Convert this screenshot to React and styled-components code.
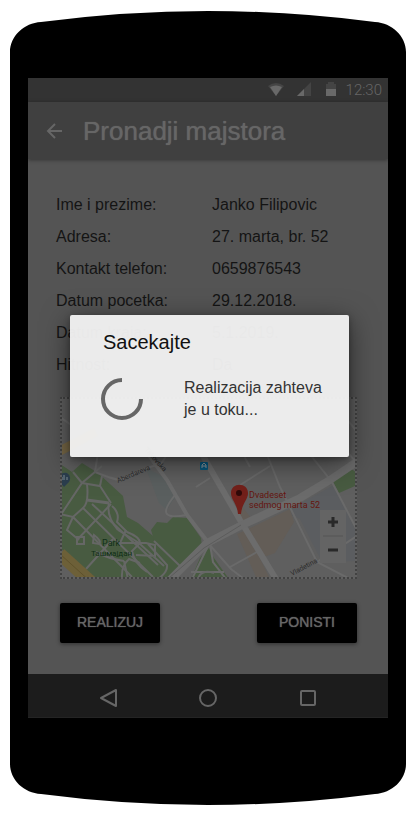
import React from "react";
import styled, { createGlobalStyle } from "styled-components";

const GlobalStyle = createGlobalStyle`
  *, *::before, *::after { box-sizing: border-box; }
  body { margin: 0; background: #fff; font-family: "Liberation Sans", Arial, sans-serif; }
`;

const Phone = styled.div`
  display: flex;
  flex-direction: column;
  padding: 10px;
`;

const Cap = styled.svg`
  display: block;
  width: 100%;
  height: 42px;
`;

const Body = styled.div`
  padding: 26px 18px 46px;
  background: #000;
`;

const Screen = styled.main`
  position: relative;
  display: flex;
  flex-direction: column;
  background: #545454;
`;

const StatusBar = styled.div`
  display: flex;
  align-items: center;
  justify-content: flex-end;
  height: 24px;
  padding: 0 6px;
  background: #333;
  color: #666;
  font: 300 15px/24px Roboto, sans-serif;
`;

const StatusIcons = styled.svg`
  width: 72px;
  height: 16px;
  margin-right: 6px;
`;

const AppBar = styled.header`
  display: flex;
  align-items: center;
  gap: 17px;
  height: 57px;
  padding: 0 16px;
  background: #404040;
  box-shadow: 0 1px 4px rgba(0, 0, 0, 0.4);
`;

const IconButton = styled.button`
  display: flex;
  padding: 0;
  border: 0;
  background: none;
  color: #666;
`;

const Title = styled.h1`
  margin: 0;
  padding-left: 2px;
  color: #666;
  font-size: 26px;
  font-weight: 400;
  line-height: 30px;
  text-shadow: 0 0 1px #666;
`;

const Content = styled.div`
  padding: 30px 31px 31px 28px;
`;

const Details = styled.dl`
  display: grid;
  grid-template-columns: 156px 1fr;
  grid-auto-rows: 32px;
  align-items: center;
  margin: 0 0 16px;
  color: #141414;
  font-size: 16px;
  dd { margin: 0; }
`;

const MapFrame = styled.div`
  margin-left: 4px;
  border: 2px dotted #424242;
  background: #606060;
`;

const MapDrawing = styled.svg`
  display: block;
  width: 100%;
  height: auto;
  font-family: Roboto, sans-serif;
`;

const Actions = styled.div`
  display: flex;
  justify-content: space-between;
  margin: 24px 0 0 4px;
`;

const ActionButton = styled.button`
  width: 100px;
  height: 40px;
  padding: 0 0 2px;
  border: 0;
  border-radius: 2px;
  background: #000;
  color: #666;
  box-shadow: 0 1px 4px rgba(0, 0, 0, 0.45);
  font: 400 14px "Liberation Sans", Arial, sans-serif;
  text-shadow: 0 0 1px #666;
`;

const NavBar = styled.nav`
  display: flex;
  align-items: center;
  justify-content: space-around;
  height: 44px;
  padding: 4px 30px 0;
  background: #1c1c1c;
  border-bottom: 1px solid #242424;
`;

const Dialog = styled.section`
  position: absolute;
  top: 237px;
  left: 42px;
  right: 39px;
  min-height: 142px;
  padding: 14px 24px 20px 33px;
  border-radius: 2px;
  background: rgba(241, 241, 241, 0.96);
  box-shadow: 0 6px 28px rgba(0, 0, 0, 0.5), 0 2px 6px rgba(0, 0, 0, 0.3);
`;

const DialogTitle = styled.h2`
  margin: 0 0 22px;
  color: #111;
  font-size: 20px;
  font-weight: 400;
  line-height: 26px;
`;

const DialogBody = styled.div`
  display: flex;
  align-items: flex-start;
  gap: 40px;
`;

const Spinner = styled.svg`
  flex: none;
  width: 44px;
  height: 44px;
  margin-left: -3px;
`;

const Message = styled.p`
  margin: 0;
  color: #333;
  font-size: 16px;
  line-height: 22px;
`;

const rows = [
  ["Ime i prezime:", "Janko Filipovic"],
  ["Adresa:", "27. marta, br. 52"],
  ["Kontakt telefon:", "0659876543"],
  ["Datum pocetka:", "29.12.2018."],
  ["Datum kraja:", "5.1.2019."],
  ["Hitnost:", "Da"],
];

const CityMap = () => (
  <MapFrame>
    <MapDrawing viewBox="2 1 293 178" role="img" aria-label="Dvadeset sedmog marta 52">
      <rect width="300" height="182" fill="#5f5f5f" />
      <path d="M86 70L108 81 119 99 113 102 107 112 99 105Z" fill="#5a5f5f" />
      <path d="M225 114L274 87 295 131V163L262 164 240 121Z" fill="#5b5d60" />
      <path d="M177 136L186 132 209 179 196 179ZM188 131L230 111 234 124 215 155 204 159ZM181 107L191 120 183 125 177 115Z" fill="#635d57" />
      <g fill="#485b41">
        <path d="M0 66L12 74 22 65 38 75 63 98 67 119 78 125 100 144 123 167 112 181H37L0 150Z" />
        <path d="M91 132L97 124 107 125 113 119 127 120 141 140 142 149 120 168 94 142Z" />
        <path d="M131 181L140 160 149 150 154 160 169 181ZM140 145L143 150 140 153Z" />
        <path d="M273 84L290 70 297 75V87L279 95Z" />
      </g>
      <g fill="none" stroke="#6a6a6a" strokeWidth="2">
        <path d="M0 19L24 36 38 55 35 74 M35 74Q52 81 60 82L83 71 101 66 108 55 M61 25L90 59" />
        <path d="M115 97Q103 112 107 116T126 117 M136 89L150 80 M177 89L210 68 M188 52L185 60 190 69" />
        <path d="M208 0V59L220 89 257 164 290 181 M220 30L252 59 272 84 297 132 M257 164L297 138 M238 0L297 65 M270 0L297 34" />
        <path d="M140 135L148 145 171 171 184 181 M170 169L197 154 M150 146L153 164 166 181 M149 146L132 181 M131 174H164" />
      </g>
      <g fill="none" stroke="#666766" strokeWidth="2">
        <path d="M0 118L22 85 42 68 M13 74L22 85 40 88 42 78 M22 85L36 73 M40 88L51 105" />
        <path d="M27 86Q29 105 23 110L93 179 M23 110L13 119 0 116 M13 119L72 179 M32 106L98 167 M13 119L7 132 19 142" />
        <path d="M51 106L17 142 M34 137Q42 143 39 146L33 145Z M17 139H24V146H17Z M53 141L26 171" />
        <path d="M27 102L49 105" strokeWidth="3" />
        <path d="M49 105Q46 118 58 132 M52 108Q60 115 57 124L67 134Q80 139 80 145" />
        <path d="M58 132L79 145 104 168 M88 146L107 167 Q108 174 98 181 M80 145L72 153Q74 165 87 174 M66 132L60 145 86 145 95 147V158L76 157 M94 143L120 168" />
        <path d="M36 154Q49 161 64 163 M62 180Q61 168 69 161L80 165 M64 163L68 181 M138 181Q141 171 154 175" />
      </g>
      <g fill="none">
        <path d="M0 53L36 34" stroke="#756645" strokeWidth="9" />
        <path d="M0 156L32 185" stroke="#6d6038" strokeWidth="13" />
        <path d="M0 156L32 185" stroke="#5f522c" strokeWidth="1" />
        <path d="M61 10L90 59 107 82 127 117 150 147" stroke="#6b6b6b" strokeWidth="4" />
        <path d="M112 0L147 65 180 122 216 181" stroke="#6c6c6c" strokeWidth="6" />
        <path d="M109 183L147 145 180 128 240 100 270 82 298 63" stroke="#6b6b6b" strokeWidth="8" />
        <path d="M109 180L144 150 181 127" stroke="#5c5c5c" strokeWidth="1" />
      </g>
      <g fill="#2b2b2b" fontSize="7">
        <text transform="translate(58 85) rotate(-23)">Aberdareva</text>
        <text transform="translate(84 52) rotate(48)">Takovska</text>
        <text transform="translate(232 178) rotate(-28)">Vladetina</text>
      </g>
      <g fill="#102f17" fontSize="9">
        <text x="42" y="148">Park</text>
        <text x="31" y="158" fontSize="8">Ташмајдан</text>
      </g>
      <rect x="140" y="64" width="8" height="8" rx="1" fill="#07577d" />
      <path d="M142 70V67L144 65 146 67V70M142 68H146" fill="none" stroke="#8b969b" />
      <path d="M0 77Q3 74 7 75Q12 78 9 84L4 89 0 84Z" fill="#2b3e4e" />
      <path d="M2 79V82M4 77V82M7 79V82" stroke="#808b91" />
      <path d="M171 95C171 84 188 84 188 95C188 102 182 105 181 116H178C177 105 171 102 171 95Z" fill="#72201a" />
      <circle cx="179" cy="95" r="3" fill="#300a09" />
      <g fill="#651610" fontSize="9">
        <text x="189" y="100">Dvadeset</text>
        <text x="189" y="110">sedmog marta 52</text>
      </g>
      <rect x="260" y="112" width="26" height="53" fill="#646464" />
      <path d="M263 138H283" stroke="#555" />
      <path d="M268 124H278M273 119V129M268 152H278" stroke="#292929" strokeWidth="3" />
    </MapDrawing>
  </MapFrame>
);

export default function App() {
  return (
    <>
      <GlobalStyle />
      <Phone>
        <Cap viewBox="0 0 396 42" preserveAspectRatio="none" aria-hidden="true">
          <path d="M0 42C0 26 14 13 31 12Q115 1 198 1T365 12C382 13 396 26 396 42Z" />
        </Cap>
        <Body>
          <Screen>
            <StatusBar>
              <StatusIcons viewBox="0 0 72 16" aria-hidden="true">
                <path d="M0 4Q8-2 16 4L8 14Z" fill="#454545" />
                <path d="M2 5Q8 2 14 5L8 14Z" fill="#696969" />
                <path d="M29 14L43 0V14Z" fill="#444" />
                <path d="M29 14L36 7V14Z" fill="#696969" />
                <path d="M58 2H60V0H66V2H68V14H58Z" fill="#444" />
                <path d="M58 7H68V14H58Z" fill="#696969" />
              </StatusIcons>
              <span>12:30</span>
            </StatusBar>
            <AppBar>
              <IconButton aria-label="Nazad">
                <svg width="20" height="20" fill="none" stroke="currentColor" strokeWidth="2">
                  <path d="M18 10H4M11 3L4 10L11 17" />
                </svg>
              </IconButton>
              <Title>Pronadji majstora</Title>
            </AppBar>
            <Content>
              <Details>
                {rows.map(([label, value]) => (
                  <React.Fragment key={label}>
                    <dt>{label}</dt>
                    <dd>{value}</dd>
                  </React.Fragment>
                ))}
              </Details>
              <CityMap />
              <Actions>
                <ActionButton>REALIZUJ</ActionButton>
                <ActionButton>PONISTI</ActionButton>
              </Actions>
            </Content>
            <NavBar>
              <IconButton aria-label="Back">
                <svg width="20" height="20" fill="none" stroke="currentColor" strokeWidth="2" strokeLinejoin="round">
                  <path d="M18 2V18L3 10Z" />
                </svg>
              </IconButton>
              <IconButton aria-label="Home">
                <svg width="20" height="20" fill="none" stroke="currentColor" strokeWidth="2">
                  <circle cx="10" cy="10" r="8" />
                </svg>
              </IconButton>
              <IconButton aria-label="Recent apps">
                <svg width="20" height="20" fill="none" stroke="currentColor" strokeWidth="2">
                  <rect x="3" y="3" width="14" height="14" rx="1" />
                </svg>
              </IconButton>
            </NavBar>
            <Dialog role="dialog" aria-labelledby="wait-title">
              <DialogTitle id="wait-title">Sacekajte</DialogTitle>
              <DialogBody>
                <Spinner viewBox="0 0 44 44" aria-hidden="true">
                  <path d="M22 3A19 19 0 1 0 41 22" fill="none" stroke="#666" strokeWidth="4" />
                </Spinner>
                <Message>Realizacija zahteva je u toku...</Message>
              </DialogBody>
            </Dialog>
          </Screen>
        </Body>
        <Cap viewBox="0 0 396 42" preserveAspectRatio="none" aria-hidden="true">
          <path d="M0 0C0 16 14 29 31 30Q115 41 198 41T365 30C382 29 396 16 396 0Z" />
        </Cap>
      </Phone>
    </>
  );
}
